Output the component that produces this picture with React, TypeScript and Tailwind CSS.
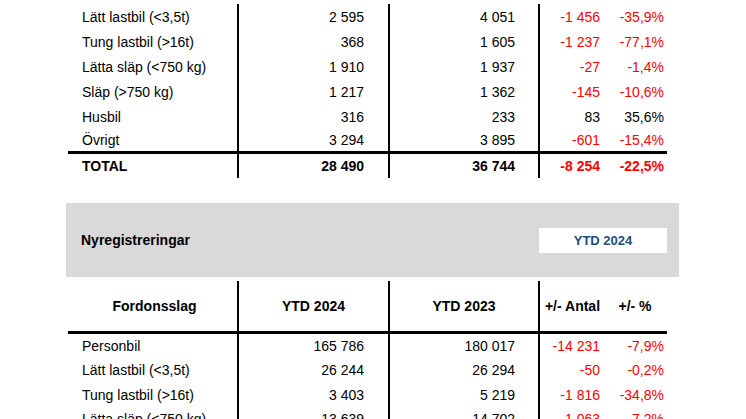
const RED = 'text-[#ff0000]';

type Row = {
  label: string;
  a: string;
  b: string;
  diff: string;
  pct: string;
  up?: boolean;
};

const topRows: Row[] = [
  { label: 'Lätt lastbil (<3,5t)', a: '2 595', b: '4 051', diff: '-1 456', pct: '-35,9%' },
  { label: 'Tung lastbil (>16t)', a: '368', b: '1 605', diff: '-1 237', pct: '-77,1%' },
  { label: 'Lätta släp (<750 kg)', a: '1 910', b: '1 937', diff: '-27', pct: '-1,4%' },
  { label: 'Släp (>750 kg)', a: '1 217', b: '1 362', diff: '-145', pct: '-10,6%' },
  { label: 'Husbil', a: '316', b: '233', diff: '83', pct: '35,6%', up: true },
  { label: 'Övrigt', a: '3 294', b: '3 895', diff: '-601', pct: '-15,4%' },
];

const ytdRows: Row[] = [
  { label: 'Personbil', a: '165 786', b: '180 017', diff: '-14 231', pct: '-7,9%' },
  { label: 'Lätt lastbil (<3,5t)', a: '26 244', b: '26 294', diff: '-50', pct: '-0,2%' },
  { label: 'Tung lastbil (>16t)', a: '3 403', b: '5 219', diff: '-1 816', pct: '-34,8%' },
  { label: 'Lätta släp (<750 kg)', a: '13 639', b: '14 702', diff: '-1 063', pct: '-7,2%' },
];

function DataRow({ row, className = 'h-[25px]', bold = false }: { row: Row; className?: string; bold?: boolean }) {
  const tone = row.up ? 'text-black' : RED;
  return (
    <div className={`flex items-center ${className} ${bold ? 'font-bold' : ''}`}>
      <div className="w-[169px] pl-[14px]">{row.label}</div>
      <div className="flex h-full w-[151px] items-center justify-end border-l-2 border-black pr-[24px]">{row.a}</div>
      <div className="flex h-full w-[150px] items-center justify-end border-l-2 border-black pr-[23px]">{row.b}</div>
      <div className={`flex h-full w-[65px] items-center justify-end border-l-2 border-black pr-[3px] ${tone}`}>
        {row.diff}
      </div>
      <div className={`w-[64px] pr-[3px] text-right ${tone}`}>{row.pct}</div>
    </div>
  );
}

export default function App() {
  return (
    <div className="h-[419px] w-[746px] overflow-hidden bg-white text-[14px] leading-none text-black [font-family:'Liberation_Sans',Arial,sans-serif]">
      <div className="ml-[66px] w-[613px]">
        {/* Monthly table, top cut off */}
        <div className="ml-[2px] w-[599px]">
          {topRows.map((row, i) => (
            <DataRow
              key={row.label}
              row={row}
              className={i === 0 ? 'h-[29px] pt-[4px]' : i === topRows.length - 1 ? 'h-[22px]' : 'h-[25px]'}
            />
          ))}
          <div className="h-[3px] w-full bg-black" />
          <DataRow
            bold
            className="h-[24px]"
            row={{ label: 'TOTAL', a: '28 490', b: '36 744', diff: '-8 254', pct: '-22,5%' }}
          />
        </div>

        {/* Section band */}
        <div className="mt-[25px] flex h-[74px] items-center justify-between bg-[#d9d9d9] pl-[15px] pr-[12px]">
          <span className="font-bold">Nyregistreringar</span>
          <div className="flex h-[25px] w-[128px] items-center justify-center bg-white text-[13px] font-bold text-[#1f4e79]">
            YTD 2024
          </div>
        </div>

        {/* YTD table */}
        <div className="ml-[2px] mt-[4px] w-[599px]">
          <div className="flex h-[50px] items-center font-bold">
            <div className="w-[169px] pl-[4px] text-center">Fordonsslag</div>
            <div className="flex h-full w-[151px] items-center justify-center border-l-2 border-black">YTD 2024</div>
            <div className="flex h-full w-[150px] items-center justify-center border-l-2 border-black">YTD 2023</div>
            <div className="flex h-full w-[65px] items-center justify-center border-l-2 border-black pl-[2px]">
              +/- Antal
            </div>
            <div className="w-[64px] text-center">+/- %</div>
          </div>
          <div className="h-[3px] w-full bg-black" />
          {ytdRows.map((row, i) => (
            <DataRow key={row.label} row={row} className={i === 0 ? 'h-[24px]' : 'h-[24.5px]'} />
          ))}
        </div>
      </div>
    </div>
  );
}
